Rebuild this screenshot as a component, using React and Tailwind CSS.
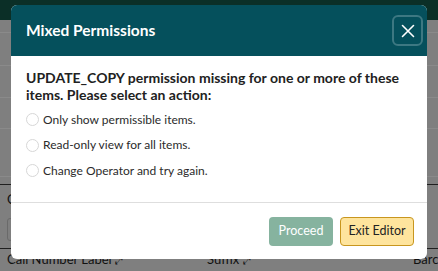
import React from "react";

const font = { fontFamily: "Lato, 'Open Sans', sans-serif" };

function Radio({ label }) {
  return (
    <label className="flex items-center gap-[4px] h-[25.5px]">
      <span className="w-[13px] h-[13px] rounded-full border border-[#d7d7d7] bg-white shrink-0" />
      <span className="text-[12px] text-[#2b2b2b]">{label}</span>
    </label>
  );
}

export default function App() {
  return (
    <div className="relative w-[438px] h-[271px] overflow-hidden bg-[#7f7f7f]" style={font}>
      {/* background page (dimmed) */}
      <div className="h-[20px] bg-[#0b2f27]" />
      <div className="h-[12px]" />
      <div className="h-px bg-[#8a8a8a]" />
      <div className="h-[32px]" />
      <div className="h-px bg-[#8a8a8a]" />
      <div className="h-[31px]" />
      <div className="h-px bg-[#8a8a8a]" />
      <div className="h-[30px]" />
      <div className="h-px bg-[#8a8a8a]" />
      <div className="h-[47px]" />
      <div className="h-px bg-[#8a8a8a]" />
      <div className="h-[7px]" />
      <div className="h-px bg-[#1f1f1f]" />
      <div className="h-[8px]" />
      <div className="h-[25px] px-[7px] flex items-start">
        <span className="text-[13px] text-[#111] leading-none">C</span>
      </div>
      <div className="flex px-[7px] gap-[2px]">
        <div className="w-[6px] h-[23px] rounded-[3px] border border-[#6a6a6a]" />
      </div>
      <div className="h-[7px]" />
      <div className="h-px bg-[#1f1f1f]" />
      <div className="flex items-center h-[22px] px-[7px] text-[13px] text-[#111] whitespace-nowrap">
        <span className="w-[200px] shrink-0">Call Number Label <span className="text-[10px]">⤢</span></span>
        <span className="w-[206px] shrink-0">Suffix <span className="text-[10px]">⤢</span></span>
        <span>Barcode</span>
      </div>

      {/* modal */}
      <div className="absolute left-[11px] top-[5px] w-[416px] h-[254px] bg-white rounded-[6px] overflow-hidden flex flex-col">
        <div className="h-[51px] bg-[#05505c] flex items-center justify-between pl-[15px] pr-[4px]">
          <h2 className="text-[15.5px] font-bold text-white">Mixed Permissions</h2>
          <button className="w-[31px] h-[31px] rounded-[6px] border-2 border-[#3d7882] flex items-center justify-center">
            <svg width="14" height="14" viewBox="0 0 14 14" stroke="white" strokeWidth="1.6" strokeLinecap="round">
              <path d="M1.5 1.5 L12.5 12.5 M12.5 1.5 L1.5 12.5" />
            </svg>
          </button>
        </div>
        <div className="flex-1 px-[15px] pt-[13px]">
          <p className="text-[14px] font-bold text-[#212121] leading-[17px] mb-[4px]">
            UPDATE_COPY permission missing for one or more of these items. Please select an action:
          </p>
          <Radio label="Only show permissible items." />
          <Radio label="Read-only view for all items." />
          <Radio label="Change Operator and try again." />
        </div>
        <div className="h-[57px] border-t border-[#dedede] flex items-center justify-end gap-[7px] pr-[13px]">
          <button className="w-[64px] h-[29px] rounded-[4px] bg-[#86b39f] text-white text-[12.5px]">Proceed</button>
          <button className="w-[74px] h-[29px] rounded-[4px] bg-[#fee49d] border border-[#c8961e] text-[#222] text-[12.5px]">Exit Editor</button>
        </div>
      </div>
    </div>
  );
}
